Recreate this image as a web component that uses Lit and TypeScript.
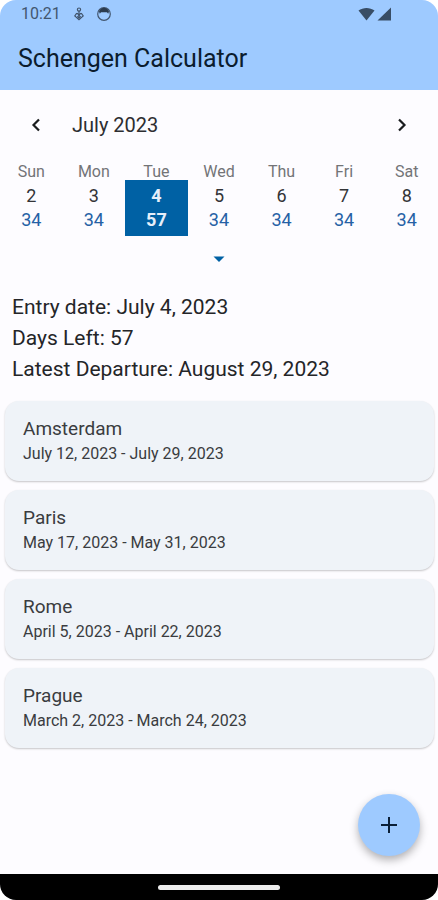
import { LitElement, html, css } from "lit";
import { customElement, property, state } from "lit/decorators.js";
import { classMap } from "lit/directives/class-map.js";

interface Day {
  name: string;
  date: number;
  left: number;
}

const WEEK: Day[] = [
  { name: "Sun", date: 2, left: 34 },
  { name: "Mon", date: 3, left: 34 },
  { name: "Tue", date: 4, left: 57 },
  { name: "Wed", date: 5, left: 34 },
  { name: "Thu", date: 6, left: 34 },
  { name: "Fri", date: 7, left: 34 },
  { name: "Sat", date: 8, left: 34 },
];

const TRIPS = [
  { city: "Amsterdam", dates: "July 12, 2023 - July 29, 2023" },
  { city: "Paris", dates: "May 17, 2023 - May 31, 2023" },
  { city: "Rome", dates: "April 5, 2023 - April 22, 2023" },
  { city: "Prague", dates: "March 2, 2023 - March 24, 2023" },
];

@customElement("status-bar")
export class StatusBar extends LitElement {
  static styles = css`
    :host {
      display: flex;
      align-items: center;
      justify-content: space-between;
      height: 28px;
      padding: 0 47px 0 21px;
      color: #42566f;
      font-size: 16px;
      line-height: 28px;
    }
    .group {
      display: flex;
      align-items: center;
    }
    .left {
      gap: 12px;
    }
    .right {
      gap: 2px;
    }
    svg {
      display: block;
    }
  `;

  render() {
    return html`
      <div class="group left">
        <span>10:21</span>
        <svg width="12" height="14" viewBox="0 0 12 14" fill="none" stroke="currentColor" stroke-width="1.2" aria-hidden="true">
          <path d="M6 4v4M4 6.200l2 2 2-2M3.800 6.200 1.800 9 6 12.800 10.200 9 8.200 6.200" />
          <circle cx="6" cy="2.600" r="1.600" />
          <path d="M6 8.500 7.300 9.800 6 11.100 4.700 9.800z" />
        </svg>
        <svg width="14" height="14" viewBox="0 0 14 14" aria-hidden="true">
          <circle cx="7" cy="7" r="6.300" fill="none" stroke="currentColor" stroke-width="1.200" />
          <path d="M2 4.500C3 2 5 .8 7 .8s4 1.200 5 3.700l-.8 2.300-1.200-1.500H4L2.800 6.800z" fill="#2b3b4e" />
        </svg>
      </div>
      <div class="group right">
        <svg width="17" height="14" viewBox="0 0 17 14" fill="#384d65" aria-hidden="true">
          <path d="M.5 3.500C5 0 12 0 16.500 3.500L8.500 13.500z" />
        </svg>
        <svg width="14" height="14" viewBox="0 0 14 14" fill="#384d65" aria-hidden="true">
          <path d="M14 .5v13H.5z" />
        </svg>
      </div>
    `;
  }
}

@customElement("week-calendar")
export class WeekCalendar extends LitElement {
  @property({ type: Number }) selected = 4;

  static styles = css`
    :host {
      display: block;
    }
    button {
      border: 0;
      padding: 0;
      background: none;
      font: inherit;
      color: inherit;
      cursor: pointer;
    }
    svg {
      display: block;
    }
    .month {
      display: flex;
      align-items: center;
      height: 70px;
      padding: 0 12px;
    }
    .arrow {
      display: grid;
      place-items: center;
      width: 48px;
      height: 48px;
    }
    .label {
      flex: 1;
      margin: 0;
      padding-left: 12px;
      color: #2d2e31;
      font-size: 20px;
      font-weight: 400;
      line-height: 24px;
    }
    table {
      width: 100%;
      table-layout: fixed;
      border-collapse: collapse;
    }
    th,
    td {
      padding: 0;
      text-align: center;
    }
    th {
      height: 20px;
      color: #737477;
      font-size: 16px;
      font-weight: 400;
      line-height: 16px;
      vertical-align: bottom;
    }
    .day {
      display: flex;
      flex-direction: column;
      justify-content: center;
      width: 100%;
      height: 56px;
      color: #333437;
      font-size: 18px;
      line-height: 24px;
    }
    .left {
      color: #2561a5;
    }
    .day.selected {
      background: #0061a4;
      font-weight: 700;
    }
    .day.selected,
    .day.selected .left {
      color: #e6effa;
    }
    .expand {
      display: grid;
      place-items: center;
      width: 48px;
      height: 46px;
      margin: 0 auto;
    }
  `;

  private pick(date: number) {
    this.selected = date;
  }

  render() {
    return html`
      <div class="month">
        <button class="arrow" aria-label="Previous week">
          <svg width="10" height="14" viewBox="0 0 10 14" fill="none" stroke="#1a1c1e" stroke-width="2.200" aria-hidden="true">
            <path d="M8 1.500 2.500 7 8 12.500" />
          </svg>
        </button>
        <h2 class="label">July 2023</h2>
        <button class="arrow" aria-label="Next week">
          <svg width="10" height="14" viewBox="0 0 10 14" fill="none" stroke="#1a1c1e" stroke-width="2.200" aria-hidden="true">
            <path d="M2 1.500 7.500 7 2 12.500" />
          </svg>
        </button>
      </div>
      <table>
        <thead>
          <tr>
            ${WEEK.map((d) => html`<th scope="col">${d.name}</th>`)}
          </tr>
        </thead>
        <tbody>
          <tr>
            ${WEEK.map(
              (d) => html`<td>
                <button
                  class=${classMap({ day: true, selected: d.date === this.selected })}
                  aria-pressed=${d.date === this.selected ? "true" : "false"}
                  @click=${() => this.pick(d.date)}
                >
                  <span>${d.date}</span>
                  <span class="left">${d.left}</span>
                </button>
              </td>`
            )}
          </tr>
        </tbody>
      </table>
      <button class="expand" aria-label="Show full month">
        <svg width="12" height="6" viewBox="0 0 12 6" fill="#0061a4" aria-hidden="true">
          <path d="M.5.5h11L6 6z" />
        </svg>
      </button>
    `;
  }
}

@customElement("trip-card")
export class TripCard extends LitElement {
  @property() city = "";
  @property() dates = "";

  static styles = css`
    :host {
      display: block;
      padding: 15px 18px;
      border-radius: 14px;
      background: #eff3f8;
      box-shadow: 0 1px 2px rgba(0, 0, 0, 0.22);
      color: #3a3c40;
    }
    h3,
    p {
      margin: 0;
      font-weight: 400;
    }
    h3 {
      font-size: 19px;
      line-height: 25px;
    }
    p {
      font-size: 16px;
      line-height: 25px;
    }
  `;

  render() {
    return html`<h3>${this.city}</h3>
      <p>${this.dates}</p>`;
  }
}

@customElement("app-root")
export class AppRoot extends LitElement {
  @state() private trips = TRIPS;

  static styles = css`
    :host {
      display: block;
      background: #fff;
      font-family: Roboto, "Liberation Sans", sans-serif;
    }
    .screen {
      display: flex;
      flex-direction: column;
      min-height: 100vh;
      border-radius: 16px;
      overflow: hidden;
      background: #fdfcff;
    }
    header {
      height: 90px;
      background: #9ecaff;
    }
    h1 {
      margin: 0;
      padding: 15px 18px 0;
      color: #0b1c2e;
      font-size: 25px;
      font-weight: 400;
      line-height: 32px;
    }
    main {
      display: flex;
      flex: 1;
      flex-direction: column;
    }
    .summary {
      padding: 10px 12px 16px;
      color: #242528;
      font-size: 21px;
      line-height: 31px;
    }
    .summary p {
      margin: 0;
    }
    .trips {
      display: flex;
      flex-direction: column;
      gap: 9px;
      margin: 0;
      padding: 0 4px 0 5px;
      list-style: none;
    }
    .actions {
      display: flex;
      flex: 1;
      align-items: flex-end;
      justify-content: flex-end;
      padding: 18px;
    }
    .add {
      display: grid;
      place-items: center;
      width: 62px;
      height: 62px;
      border: 0;
      border-radius: 50%;
      padding: 0;
      background: #9ecaff;
      box-shadow: 0 4px 8px rgba(0, 0, 0, 0.3);
      cursor: pointer;
    }
    .add svg {
      display: block;
    }
    footer {
      display: flex;
      align-items: center;
      justify-content: center;
      height: 26px;
      background: #000;
    }
    .handle {
      width: 122px;
      height: 5px;
      border-radius: 3px;
      background: #ececec;
    }
  `;

  render() {
    return html`
      <div class="screen">
        <header>
          <status-bar></status-bar>
          <h1>Schengen Calculator</h1>
        </header>
        <main>
          <week-calendar></week-calendar>
          <section class="summary">
            <p>Entry date: July 4, 2023</p>
            <p>Days Left: 57</p>
            <p>Latest Departure: August 29, 2023</p>
          </section>
          <ul class="trips">
            ${this.trips.map(
              (t) => html`<li><trip-card .city=${t.city} .dates=${t.dates}></trip-card></li>`
            )}
          </ul>
          <div class="actions">
            <button class="add" aria-label="Add trip">
              <svg width="16" height="16" viewBox="0 0 16 16" stroke="#0b2038" stroke-width="2" aria-hidden="true">
                <path d="M8 0v16M0 8h16" />
              </svg>
            </button>
          </div>
        </main>
        <footer><div class="handle"></div></footer>
      </div>
    `;
  }
}
